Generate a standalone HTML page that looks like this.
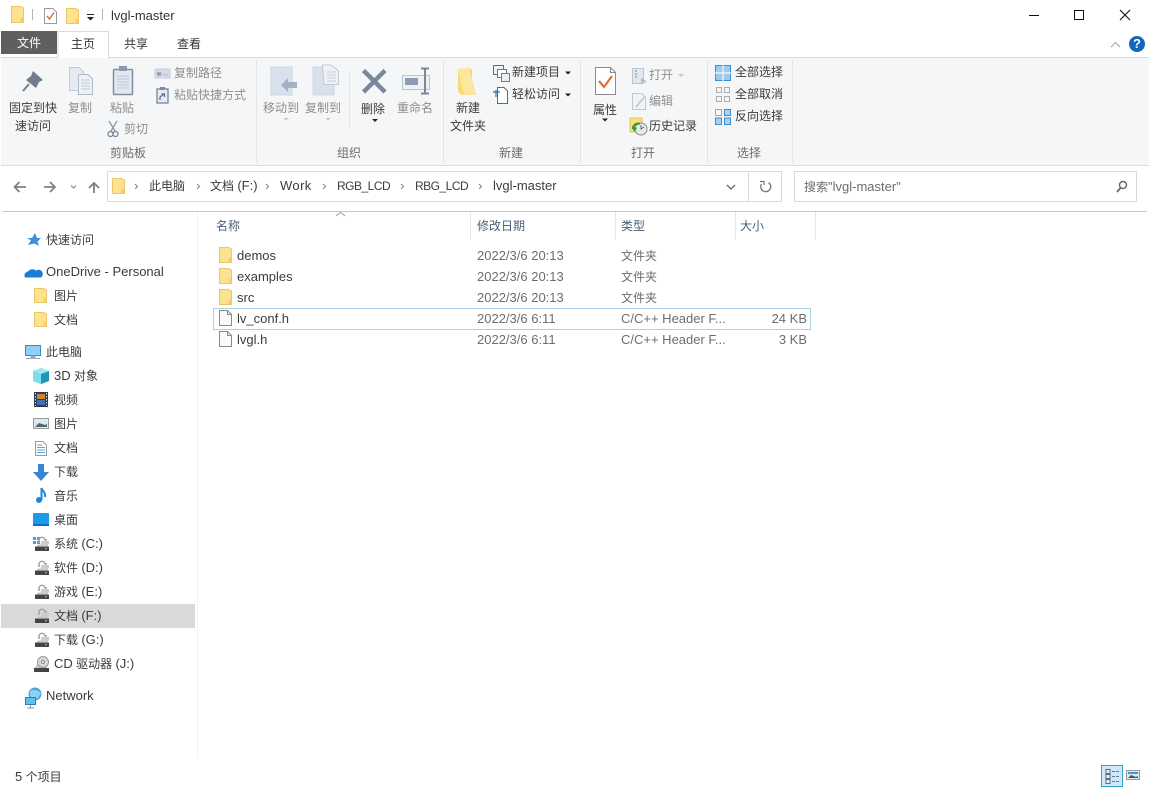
<!DOCTYPE html>
<html lang="zh"><head><meta charset="utf-8"><title>lvgl-master</title>
<style>
html,body{margin:0;padding:0;background:#fff}
#w{position:relative;width:1149px;height:789px;overflow:hidden;background:#fff;font:12px/16px "Liberation Sans","Noto Sans CJK SC",sans-serif;color:#3c3c3c;filter:blur(.3px)}
#w>svg{position:absolute;left:0;top:0}
.t{position:absolute;white-space:nowrap;line-height:16px;height:16px;margin-top:1px}
.l{font-size:13px}
.c{font-size:12px;letter-spacing:-.5px}
.g{color:#8f8f8f}
.d{color:#6d6d6d}
.h{color:#4c607a}
</style></head><body><div id="w">
<svg width="1149" height="789" viewBox="0 0 1149 789" xmlns="http://www.w3.org/2000/svg">
<defs>
<symbol id="f" viewBox="0 0 13 16" preserveAspectRatio="none" overflow="visible"><path d="M.5.5H9.5L12.5 2V15.5H.5Z" fill="#fde38f" stroke="#e9c766"/><path d="M9.5 15.5V11H12.5V15.5Z" fill="#f2cf68"/></symbol>
<symbol id="doc" viewBox="0 0 13 16" preserveAspectRatio="none" overflow="visible"><path d="M.5.5H8.500L12.500 4.500V15.500H.5Z" fill="#fafafa" stroke="#8a8a8a"/><path d="M8.500.5V4.500H12.500" fill="none" stroke="#8a8a8a"/></symbol>
<symbol id="drv" viewBox="0 0 16 17" preserveAspectRatio="none" overflow="visible"><path d="M5 8V4.500A3 3 0 0 1 11 4.500H13" fill="none" stroke="#a3a3a3" stroke-width="1.600"/><rect x="7" y="5.500" width="8" height="4" fill="#ccc"/><path d="M2 12L4 9.500H14V12Z" fill="#c9c9c9"/><rect x="1" y="12" width="14" height="5" fill="#444"/><rect x="11" y="14" width="2" height="1" fill="#cfcfcf"/></symbol>
</defs>

<!-- title bar -->
<use href="#f" x="11" y="6" width="13" height="17"/>
<rect x="32" y="9" width="1" height="11" fill="#b5b5b5"/>
<path d="M44.500 8.500H53L56.500 12V23.500H44.500Z" fill="#fff" stroke="#9a9a9a"/>
<path d="M47 16L49.500 19L54 12.500" fill="none" stroke="#dd6a3a" stroke-width="1.400"/>
<use href="#f" x="66" y="8" width="13" height="16"/>
<rect x="87" y="14" width="7" height="1" fill="#222"/><path d="M87 17H94L90.500 20.500Z" fill="#222"/>
<rect x="102" y="9" width="1" height="11" fill="#b5b5b5"/>
<path d="M1029 15.500H1039" stroke="#111"/>
<rect x="1074.500" y="10.500" width="9" height="9" fill="none" stroke="#111"/>
<path d="M1120 10L1130 20M1130 10L1120 20" stroke="#111" stroke-width="1.100"/>

<!-- tabs -->
<rect x="1" y="31" width="56" height="23" fill="#5f5f5f"/>
<path d="M58 57V31.500H108.500V57" fill="#fff" stroke="#d9dadb"/>
<rect x="1" y="57" width="1148" height="108" fill="#f5f6f7"/>
<rect x="0" y="57" width="58" height="1" fill="#dadbdc"/><rect x="108" y="57" width="1041" height="1" fill="#dadbdc"/>
<rect x="59" y="57" width="49" height="1" fill="#fff"/>
<rect x="1" y="165" width="1148" height="1" fill="#dcdddd"/>
<path d="M1111 47L1115.500 42.500L1120 47" fill="none" stroke="#b5b5b5" stroke-width="1.300"/>
<circle cx="1137" cy="44" r="8" fill="#1266bd"/>

<!-- ribbon seps -->
<path d="M256.500 60V162M443.500 60V162M580.500 60V162M707.500 60V162M792.500 60V162" stroke="#e3e4e6"/>
<path d="M349.500 72V128" stroke="#e3e4e6"/>

<!-- pin -->
<path d="M33 71L43 80L39 82L36 88L26 80L31 76Z" fill="#717d8a"/><path d="M29 84L23 91" stroke="#717d8a" stroke-width="2"/>
<!-- copy -->
<path d="M69.500 67.500H79L83.500 72V90.500H69.500Z" fill="#e6ebf3" stroke="#c3cbd8"/>
<path d="M78.500 74.500H88L92.500 79V94.500H78.500Z" fill="#eef1f7" stroke="#b0bac9"/>
<path d="M81 80H90M81 83H90M81 86H90M81 89H90" stroke="#c3cbd8"/>
<!-- paste -->
<rect x="113.500" y="69.500" width="19" height="25" rx="1" fill="#e2e8f2" stroke="#7e8ea3" stroke-width="1.500"/>
<rect x="119" y="66" width="8" height="5" fill="#8b99ab"/>
<path d="M117 76H129M117 79H129M117 82H129M117 85H129M117 88H129" stroke="#bcc6d6"/>
<!-- scissors -->
<path d="M109 121L115 131M117 121L111 131" stroke="#8a97a8" stroke-width="1.300"/>
<circle cx="110.500" cy="134" r="2.500" fill="none" stroke="#727f90" stroke-width="1.200"/><circle cx="115.500" cy="134" r="2.500" fill="none" stroke="#727f90" stroke-width="1.200"/>
<!-- copy path -->
<rect x="155" y="69" width="15" height="9" fill="#d5dbe9" stroke="#c6cede"/>
<path d="M157 72L158 76L159 72L160 76L161 72M163 75H164M165 75H166M167 75H168" stroke="#7f8aa3" fill="none" stroke-width=".8"/>
<!-- paste shortcut -->
<rect x="157" y="89" width="11" height="14" fill="#e6ebf2" stroke="#7a8ba0" stroke-width="1.400"/>
<rect x="160" y="87" width="5" height="3" fill="#7a8ba0"/>
<path d="M160 100V97L164 94M161.500 94H164.500V97" fill="none" stroke="#556a85" stroke-width="1.200"/>

<!-- move to -->
<rect x="271" y="67" width="21" height="28" fill="#d8e0ec" stroke="#cfd7e4"/>
<path d="M281 88L288 81V85H297V91H288V95Z" fill="#a5afc6" transform="translate(0,-3)"/>
<path d="M283.500 118L286 120.500L288.500 118Z" fill="#c0c0c0"/>
<!-- copy to -->
<rect x="313" y="67" width="21" height="28" fill="#d8e0ec" stroke="#cfd7e4"/>
<path d="M322.500 65H331L338.500 71V84.500H324Z" fill="#eef1f7" stroke="#c3cbd8"/>
<path d="M327 72H336M327 75H336M327 78H336M327 81H336" stroke="#c8d0dc"/>
<path d="M325.500 118L328 120.500L330.500 118Z" fill="#c0c0c0"/>
<!-- delete -->
<path d="M363.500 70.500L385 92M385 70.500L363.500 92" stroke="#7b889c" stroke-width="4.500"/>
<path d="M372 119L375 122L378 119Z" fill="#222"/>
<!-- rename -->
<rect x="402.500" y="75.500" width="27" height="14" fill="#eef1f6" stroke="#b9c3d1"/>
<rect x="405" y="78" width="13" height="7" fill="#8e9cb3"/>
<path d="M421 68.500H429M425 68.500V93.500M421 93.500H429" stroke="#7b889c" stroke-width="2" fill="none"/>
<!-- new folder -->
<path d="M458 69L469 68L472 70V84L476 95H462L458 92Z" fill="#fbd872"/>
<path d="M458 69L469 68L472 70V84L476 95H465L461 84Z" fill="#fde79f"/>
<path d="M469 68L472 70V84L476 95" fill="#f4cb5c" opacity=".6"/>
<!-- new item -->
<rect x="493.500" y="65.500" width="10" height="9" fill="#eef3f8" stroke="#4a7690"/>
<rect x="497.500" y="69.500" width="9" height="8" fill="#fff" stroke="#6b7a8a"/>
<rect x="501.500" y="73.500" width="8" height="8" fill="#eee" stroke="#7a7a7a"/>
<!-- easy access -->
<path d="M497.500 87.500H504L507.500 91V103.500H497.500Z" fill="#fff" stroke="#666"/>
<path d="M493 92H500M496 90V97" stroke="#2a7a9a" stroke-width="1.200"/>
<path d="M565 71.500H571L568 74.500ZM565 93.500H571L568 96.500Z" fill="#222"/>

<!-- properties -->
<path d="M595.500 67.500H610.500L615.500 72.500V94.500H595.500Z" fill="#fff" stroke="#8c8c8c"/>
<path d="M610.500 67.500V72.500H615.500" fill="none" stroke="#8c8c8c"/>
<path d="M599 81L604 87L612 76" fill="none" stroke="#e2703a" stroke-width="2.200"/>
<path d="M602 118.500H608L605 121.500Z" fill="#222"/>
<!-- open -->
<rect x="632.500" y="68.500" width="11" height="15" fill="#e2e7ef" stroke="#bcc5d2"/>
<path d="M635 71H637M635 74H637M635 77H637" stroke="#8d9aac" stroke-width="1.300"/>
<path d="M642 84V79L646 82" fill="none" stroke="#a5b0c0" stroke-width="1.200"/>
<path d="M678 74H684L681 77Z" fill="#c8c8c8"/>
<!-- edit -->
<path d="M632.500 93.500H642L645.500 97V109.500H632.500Z" fill="#f1f3f7" stroke="#c0c8d5"/>
<path d="M636 107L645 96" stroke="#c6cfdc" stroke-width="2"/>
<!-- history -->
<rect x="630" y="118" width="12" height="14" fill="#fbdf81" stroke="#e9c45a"/>
<circle cx="641" cy="129" r="6" fill="#e8e8e8" stroke="#8a8a8a"/>
<path d="M641 125V129L644 127" fill="none" stroke="#666"/>
<path d="M633 129A5 5 0 0 1 640 124" fill="none" stroke="#2f9e2f" stroke-width="2"/>
<path d="M632 126L634 132L637 128Z" fill="#2f9e2f"/>
<!-- select -->
<rect x="715.500" y="65.500" width="15" height="15" fill="#9ccbee" stroke="#3a8ed2"/>
<path d="M723 65V81M715 73H731" stroke="#f5f6f7" stroke-width="1.200"/>
<path d="M716.500 87.500H721.500V92.500H716.500ZM724.500 87.500H729.500V92.500H724.500ZM716.500 96.500H721.500V101.500H716.500ZM724.500 96.500H729.500V101.500H724.500Z" fill="none" stroke="#adadad"/>
<path d="M715.500 118H721.500V124.500H715.500ZM724.500 118H730.500V124.500H724.500Z" fill="#a9d0ef" stroke="#3a8ed2"/>
<path d="M715.500 109.500H721.500V115.500H715.500Z" fill="#f5f6f7" stroke="#9aa7b5"/>
<path d="M724.500 109.500H730.500V115.500H724.500Z" fill="#a9d0ef" stroke="#3a8ed2"/>

<!-- address bar -->
<path d="M15 187H26M19.500 182L14.500 187L19.500 192" fill="none" stroke="#808080" stroke-width="1.700"/>
<path d="M44 187H55M50 182L55 187L50 192" fill="none" stroke="#808080" stroke-width="1.700"/>
<path d="M71 185.500L73.500 188L76 185.500" fill="none" stroke="#9a9a9a" stroke-width="1.300"/>
<path d="M94 193V183M89 188L94 183L99 188" fill="none" stroke="#808080" stroke-width="1.800"/>
<rect x="107.500" y="171.500" width="674" height="30" fill="#fff" stroke="#dadada"/>
<path d="M748.500 172V201" stroke="#dadada"/>
<use href="#f" x="112" y="178" width="13" height="16"/>
<path d="M135 184L137.500 186.500L135 189M197 184L199.500 186.500L197 189M266 184L268.500 186.500L266 189M323 184L325.500 186.500L323 189M401 184L403.500 186.500L401 189M479 184L481.500 186.500L479 189" fill="none" stroke="#8a8a8a" stroke-width="1.100"/>
<path d="M727 185L731 189L735 185" fill="none" stroke="#666" stroke-width="1.300"/>
<path d="M768.500 182.500A5 5 0 1 1 761.500 184" fill="none" stroke="#777" stroke-width="1.300"/>
<path d="M760 181.500H764V185" fill="none" stroke="#777" stroke-width="1.200"/>
<rect x="794.500" y="171.500" width="342" height="30" fill="#fff" stroke="#dadada"/>
<circle cx="1123" cy="185" r="3.500" fill="none" stroke="#666" stroke-width="1.400"/><path d="M1120.500 188L1117 192" stroke="#666" stroke-width="1.800"/>
<rect x="2" y="211" width="1145" height="1" fill="#c9c9c9"/>

<!-- columns -->
<path d="M470.500 212V240M615.500 212V240M735.500 212V240M815.500 212V240" stroke="#e7e7e7"/>
<path d="M336 216L340.500 212.500L345 216" fill="none" stroke="#a0a0a0"/>
<use href="#f" x="219" y="247" width="13" height="16"/>
<use href="#f" x="219" y="268" width="13" height="16"/>
<use href="#f" x="219" y="289" width="13" height="16"/>
<rect x="213.500" y="308.500" width="597" height="21" fill="#fff" stroke="#a9d2e8"/>
<use href="#doc" x="219" y="310" width="13" height="16"/>
<use href="#doc" x="219" y="331" width="13" height="16"/>

<!-- nav -->
<rect x="197" y="212" width="1" height="545" fill="#f3f3f3"/>
<rect x="1" y="604" width="194" height="24" fill="#d9d9d9"/>
<path d="M35 233L37 238H41L37.500 241.500L39 246L34.500 243.500L28 245L31 240.500L27 238H32Z" fill="#3f8fd8"/>
<path d="M25 277A4 4 0 0 1 28 271A5.500 5.500 0 0 1 36 270A4 4 0 0 1 41 277Z" fill="#1a7ed6" transform="translate(0,.5)"/>
<use href="#f" x="34" y="288" width="13" height="15"/>
<use href="#f" x="34" y="312" width="13" height="15"/>
<!-- pc -->
<rect x="25.500" y="345.500" width="15" height="10" fill="#8fd0f5" stroke="#3a8bbd"/>
<path d="M31 356H35V358H31ZM26 358.500H40" stroke="#9aa9b5" fill="#9aa9b5"/>
<!-- 3d -->
<path d="M33 371L41 368L49 371V381L41 384L33 381Z" fill="#38b8cf"/><path d="M33 371L41 374V384L33 381Z" fill="#7fdde6"/><path d="M41 374L49 371V381L41 384Z" fill="#1f95b8"/><path d="M33 371L41 368L49 371L41 374Z" fill="#9ceaf0"/>
<!-- video -->
<rect x="34" y="392" width="14" height="15" fill="#2f3b52"/><rect x="37" y="394" width="8" height="5" fill="#c98a2f"/><rect x="37" y="400" width="8" height="5" fill="#3f71b7"/>
<path d="M35.500 393V406M46.500 393V406" stroke="#d8d8d8" stroke-dasharray="1.500 1.500"/>
<!-- picture -->
<rect x="33.500" y="418.500" width="15" height="10" fill="#dbe9f2" stroke="#9a9a9a"/><path d="M35 427L39 423L45 425L47 424V427Z" fill="#4d6a6a"/>
<!-- doc -->
<path d="M35.500 441.500H43L46.500 445V455.500H35.500Z" fill="#fff" stroke="#9a9a9a"/><path d="M37 445H42M37 447.500H45M37 450H45M37 452.500H45" stroke="#5aa3d5"/>
<!-- download -->
<path d="M38 464H44V472H49L41 481L33 472H38Z" fill="#3a84d6"/>
<!-- music -->
<circle cx="39" cy="500" r="3" fill="#1f86dc"/><path d="M41.500 500V488C42 491 46 492 45 497" fill="none" stroke="#1f86dc" stroke-width="2"/>
<!-- desktop -->
<rect x="33" y="513" width="16" height="13" rx="1" fill="#1a9bea"/><rect x="33" y="524" width="16" height="2" fill="#0d6fc0"/>
<!-- drives -->
<g><rect x="33" y="537" width="3" height="3" fill="#35a7e8"/><rect x="37" y="537" width="3" height="3" fill="#35a7e8"/><rect x="33" y="541" width="3" height="3" fill="#35a7e8"/><rect x="37" y="541" width="3" height="3" fill="#35a7e8"/></g>
<use href="#drv" x="34" y="536" width="16" height="15"/>
<use href="#drv" x="34" y="560" width="16" height="15"/>
<use href="#drv" x="34" y="584" width="16" height="15"/>
<use href="#drv" x="34" y="608" width="16" height="15"/>
<use href="#drv" x="34" y="632" width="16" height="15"/>
<path d="M35 668L37 664H47V668Z" fill="#c9c9c9"/><rect x="34" y="668" width="15" height="4" fill="#444"/><circle cx="43" cy="662" r="5.500" fill="#d8d8d8" stroke="#999"/><circle cx="43" cy="662" r="1.500" fill="#fff" stroke="#888"/>
<!-- network -->
<circle cx="35" cy="694" r="6.500" fill="#4fa3e0"/><path d="M30 691Q35 688 41 693L38 698Q33 699 30 696Z" fill="#8fd0f5"/>
<rect x="25.500" y="697.500" width="10" height="7" fill="#5fc1f2" stroke="#2f7fb5"/><path d="M30.500 705V708M27 708H34" stroke="#8a9aa6"/>

<!-- status -->
<rect x="1101.500" y="765.500" width="21" height="21" fill="#cce8ff" stroke="#3fa2c7"/>
<path d="M1106 769.500H1110V773.500H1106ZM1106 774.500H1110V778.500H1106ZM1106 779.500H1110V783.500H1106Z" fill="#eaf6ff" stroke="#5a6a75"/>
<path d="M1112 771.500H1119M1112 776.500H1119M1112 781.500H1119" stroke="#6a7a85" stroke-dasharray="3 1"/>
<rect x="1126.500" y="770.500" width="13" height="9" fill="#dce9f2" stroke="#9a9a9a"/><path d="M1128 778L1131 775L1136 777L1138 776V778Z" fill="#3d5a5a"/><rect x="1128" y="772" width="10" height="2" fill="#3f96dc"/>
</svg>

<div class="t l" style="left:111px;top:7px;color:#333">lvgl-master</div>
<div class="t" style="left:17px;top:34px;color:#fff">文件</div>
<div class="t" style="left:71px;top:35px;color:#333">主页</div>
<div class="t" style="left:124px;top:35px;color:#333">共享</div>
<div class="t" style="left:177px;top:35px;color:#333">查看</div>
<div class="t" style="left:1133px;top:35px;color:#fff;font-weight:700;font-size:13px">?</div>

<div class="t" style="left:9px;top:99px">固定到快</div>
<div class="t" style="left:15px;top:117px">速访问</div>
<div class="t g" style="left:68px;top:99px">复制</div>
<div class="t g" style="left:110px;top:99px">粘贴</div>
<div class="t g" style="left:124px;top:120px">剪切</div>
<div class="t g" style="left:174px;top:64px">复制路径</div>
<div class="t g" style="left:174px;top:86px">粘贴快捷方式</div>
<div class="t d" style="left:110px;top:144px">剪贴板</div>
<div class="t g" style="left:263px;top:99px">移动到</div>
<div class="t g" style="left:305px;top:99px">复制到</div>
<div class="t" style="left:361px;top:100px">删除</div>
<div class="t g" style="left:397px;top:99px">重命名</div>
<div class="t d" style="left:337px;top:144px">组织</div>
<div class="t" style="left:456px;top:99px">新建</div>
<div class="t" style="left:450px;top:117px">文件夹</div>
<div class="t" style="left:512px;top:63px">新建项目</div>
<div class="t" style="left:512px;top:85px">轻松访问</div>
<div class="t d" style="left:499px;top:144px">新建</div>
<div class="t" style="left:593px;top:101px">属性</div>
<div class="t g" style="left:649px;top:66px">打开</div>
<div class="t g" style="left:649px;top:92px">编辑</div>
<div class="t" style="left:649px;top:117px">历史记录</div>
<div class="t d" style="left:631px;top:144px">打开</div>
<div class="t" style="left:735px;top:63px">全部选择</div>
<div class="t" style="left:735px;top:85px">全部取消</div>
<div class="t" style="left:735px;top:107px">反向选择</div>
<div class="t d" style="left:737px;top:144px">选择</div>

<div class="t" style="left:149px;top:177px">此电脑</div>
<div class="t" style="left:210px;top:177px">文档 <span class="l">(F:)</span></div>
<div class="t l" style="left:280px;top:177px;letter-spacing:.4px">Work</div>
<div class="t c" style="left:337px;top:177px">RGB_LCD</div>
<div class="t c" style="left:415px;top:177px">RBG_LCD</div>
<div class="t l" style="left:493px;top:177px">lvgl-master</div>
<div class="t d" style="left:804px;top:178px">搜索<span class="l">"lvgl-master"</span></div>

<div class="t h" style="left:216px;top:217px">名称</div>
<div class="t h" style="left:477px;top:217px">修改日期</div>
<div class="t h" style="left:621px;top:217px">类型</div>
<div class="t h" style="left:740px;top:217px">大小</div>

<div class="t l" style="left:237px;top:247px">demos</div>
<div class="t l" style="left:237px;top:268px">examples</div>
<div class="t l" style="left:237px;top:289px">src</div>
<div class="t l" style="left:237px;top:310px">lv_conf.h</div>
<div class="t l" style="left:237px;top:331px">lvgl.h</div>
<div class="t l d" style="left:477px;top:247px">2022/3/6 20:13</div>
<div class="t l d" style="left:477px;top:268px">2022/3/6 20:13</div>
<div class="t l d" style="left:477px;top:289px">2022/3/6 20:13</div>
<div class="t l d" style="left:477px;top:310px">2022/3/6 6:11</div>
<div class="t l d" style="left:477px;top:331px">2022/3/6 6:11</div>
<div class="t d" style="left:621px;top:247px">文件夹</div>
<div class="t d" style="left:621px;top:268px">文件夹</div>
<div class="t d" style="left:621px;top:289px">文件夹</div>
<div class="t l d" style="left:621px;top:310px">C/C++ Header F...</div>
<div class="t l d" style="left:621px;top:331px">C/C++ Header F...</div>
<div class="t l d" style="right:342px;top:310px">24 KB</div>
<div class="t l d" style="right:342px;top:331px">3 KB</div>

<div class="t" style="left:46px;top:231px">快速访问</div>
<div class="t l" style="left:46px;top:263px">OneDrive - Personal</div>
<div class="t" style="left:54px;top:287px">图片</div>
<div class="t" style="left:54px;top:311px">文档</div>
<div class="t" style="left:46px;top:343px">此电脑</div>
<div class="t" style="left:54px;top:367px"><span class="l">3D</span> 对象</div>
<div class="t" style="left:54px;top:391px">视频</div>
<div class="t" style="left:54px;top:415px">图片</div>
<div class="t" style="left:54px;top:439px">文档</div>
<div class="t" style="left:54px;top:463px">下载</div>
<div class="t" style="left:54px;top:487px">音乐</div>
<div class="t" style="left:54px;top:511px">桌面</div>
<div class="t" style="left:54px;top:535px">系统 <span class="l">(C:)</span></div>
<div class="t" style="left:54px;top:559px">软件 <span class="l">(D:)</span></div>
<div class="t" style="left:54px;top:583px">游戏 <span class="l">(E:)</span></div>
<div class="t" style="left:54px;top:607px">文档 <span class="l">(F:)</span></div>
<div class="t" style="left:54px;top:631px">下载 <span class="l">(G:)</span></div>
<div class="t" style="left:54px;top:655px"><span class="l">CD</span> 驱动器 <span class="l">(J:)</span></div>
<div class="t l" style="left:46px;top:687px">Network</div>
<div class="t" style="left:15px;top:768px"><span class="l">5</span> 个项目</div>
</div></body></html>
